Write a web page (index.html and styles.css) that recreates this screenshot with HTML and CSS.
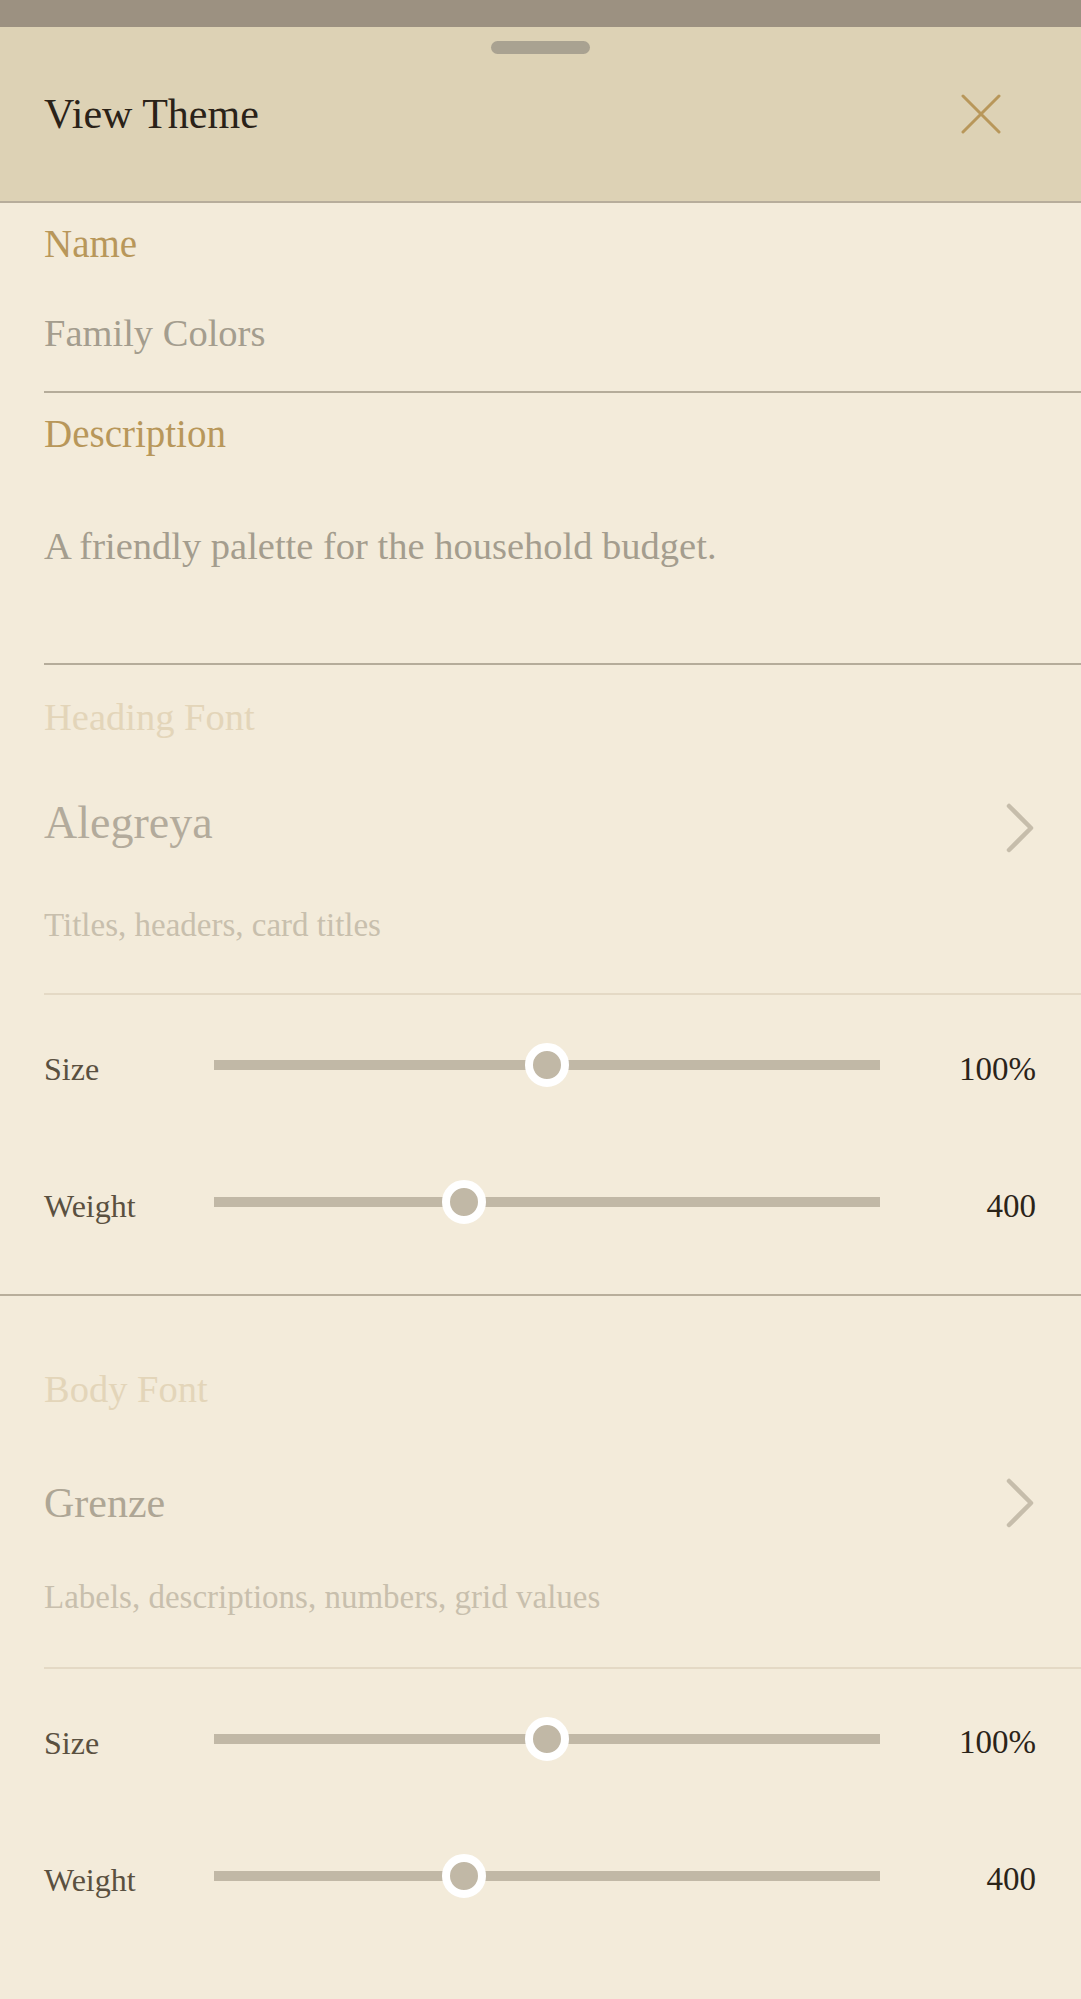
FILE: index.html
```html
<!DOCTYPE html>
<html lang="en">
<head>
<meta charset="utf-8">
<title>View Theme</title>
<link rel="stylesheet" href="styles.css">
</head>
<body>
<div class="statusbar"></div>
<div class="sheet">
  <header class="sheet-header">
    <div class="handle"></div>
    <div class="title-row">
      <h1 class="title">View Theme</h1>
      <button class="close" aria-label="Close">
        <svg width="40" height="40" viewBox="0 0 40 40"><path d="M2 2 L38 38 M38 2 L2 38" fill="none" stroke="#b8975a" stroke-width="3" stroke-linecap="round"/></svg>
      </button>
    </div>
  </header>

  <section class="fields">
    <div class="field field-name">
      <div class="field-label">Name</div>
      <div class="field-value">Family Colors</div>
    </div>
    <div class="field field-desc">
      <div class="field-label">Description</div>
      <div class="field-value">A friendly palette for the household budget.</div>
    </div>
  </section>

  <section class="font-section heading-section">
    <div class="font-picker">
      <div class="section-label">Heading Font</div>
      <div class="font-row">
        <span class="font-name alegreya">Alegreya</span>
        <svg class="chevron chevron-low" width="32" height="52" viewBox="0 0 32 52"><path d="M5 4 L27 26 L5 48" fill="none" stroke="#c6bdab" stroke-width="4.5" stroke-linecap="round" stroke-linejoin="round"/></svg>
      </div>
      <div class="font-hint">Titles, headers, card titles</div>
    </div>
    <div class="sliders">
      <div class="slider-row">
        <span class="slider-label">Size</span>
        <div class="slider"><div class="track"></div><div class="thumb" style="left:50%"></div></div>
        <span class="slider-value">100%</span>
      </div>
      <div class="slider-row">
        <span class="slider-label">Weight</span>
        <div class="slider"><div class="track"></div><div class="thumb" style="left:37.5%"></div></div>
        <span class="slider-value">400</span>
      </div>
    </div>
  </section>

  <section class="font-section body-section">
    <div class="font-picker">
      <div class="section-label">Body Font</div>
      <div class="font-row">
        <span class="font-name grenze">Grenze</span>
        <svg class="chevron" width="32" height="52" viewBox="0 0 32 52"><path d="M5 4 L27 26 L5 48" fill="none" stroke="#c6bdab" stroke-width="4.5" stroke-linecap="round" stroke-linejoin="round"/></svg>
      </div>
      <div class="font-hint">Labels, descriptions, numbers, grid values</div>
    </div>
    <div class="sliders">
      <div class="slider-row">
        <span class="slider-label">Size</span>
        <div class="slider"><div class="track"></div><div class="thumb" style="left:50%"></div></div>
        <span class="slider-value">100%</span>
      </div>
      <div class="slider-row">
        <span class="slider-label">Weight</span>
        <div class="slider"><div class="track"></div><div class="thumb" style="left:37.5%"></div></div>
        <span class="slider-value">400</span>
      </div>
    </div>
  </section>
</div>
</body>
</html>
```

FILE: styles.css
```css
html, body {
  margin: 0;
  padding: 0;
  background: #f3ebda;
}

body {
  font-family: "Liberation Serif", "Times New Roman", serif;
  color: #2a2218;
}

.statusbar {
  height: 27px;
  background: #9c9181;
}

.sheet {
  background: #f3ebda;
}

.sheet-header {
  background: #ddd2b5;
  padding: 14px 0 27px;
  border-bottom: 2px solid #b7ad9b;
}

.handle {
  width: 99px;
  height: 13px;
  border-radius: 7px;
  background: #a9a291;
  margin: 0 auto;
}

.title-row {
  height: 120px;
  display: flex;
  align-items: center;
  justify-content: space-between;
  padding-left: 44px;
  padding-right: 80px;
}

.title {
  margin: 0;
  font-size: 42px;
  font-weight: 400;
  line-height: 48px;
  color: #2a2218;
}

.close {
  border: 0;
  background: none;
  padding: 0;
  width: 40px;
  height: 40px;
  display: block;
}

.close svg {
  display: block;
}

/* text fields */
.fields {
  margin-left: 44px;
}

.field {
  padding-top: 18px;
  border-bottom: 2px solid #b5ac9a;
}

.field-label {
  font-size: 39px;
  line-height: 46px;
  color: #b8975a;
}

.field-value {
  font-size: 38.5px;
  line-height: 46px;
  color: #a49d8e;
}

.field-name .field-value {
  margin-top: 43px;
}

.field-name {
  padding-bottom: 35px;
}

.field-desc .field-value {
  margin-top: 66px;
}

.field-desc {
  padding-bottom: 94px;
}

/* font sections */
.font-section {
  border-bottom: 2px solid #b8ae9b;
}

.heading-section {
  padding-top: 29px;
  padding-bottom: 67px;
}

.body-section {
  padding-top: 70px;
  border-bottom: 0;
}

.font-picker {
  margin-left: 44px;
  border-bottom: 2px solid #e4d9c5;
}

.heading-section .font-picker {
  padding-bottom: 48px;
}

.body-section .font-picker {
  padding-bottom: 50px;
}

.section-label {
  font-size: 38.5px;
  line-height: 46px;
  color: #e3d5b9;
}

.font-row {
  height: 54px;
  display: flex;
  align-items: center;
  justify-content: space-between;
  padding-right: 45px;
}

.heading-section .font-row {
  margin-top: 56px;
}

.body-section .font-row {
  margin-top: 64px;
}

.font-name {
  line-height: 54px;
}

.font-name.alegreya {
  font-size: 46px;
  color: #b3ab9c;
}

.font-name.grenze {
  font-size: 42px;
  color: #aea695;
}

.chevron {
  display: block;
}

.chevron-low {
  margin-top: 10px;
}

.font-hint {
  font-size: 33px;
  line-height: 40px;
  color: #c8bfad;
}

.heading-section .font-hint {
  margin-top: 55px;
}

.body-section .font-hint {
  margin-top: 47px;
}

/* sliders */
.sliders {
  display: flex;
  flex-direction: column;
  gap: 87px;
}

.heading-section .sliders {
  margin-top: 45px;
}

.body-section .sliders {
  margin-top: 44.5px;
}

.slider-row {
  height: 50px;
  display: flex;
  align-items: center;
  padding-left: 44px;
  padding-right: 45px;
}

.slider-label {
  width: 170px;
  flex: none;
  font-size: 32px;
  line-height: 40px;
  margin-top: 8px;
  color: #5a5040;
}

.slider {
  position: relative;
  width: 666px;
  flex: none;
  height: 44px;
  display: flex;
  align-items: center;
}

.track {
  width: 100%;
  height: 10px;
  background: #c1b8a6;
}

.thumb {
  position: absolute;
  top: 50%;
  width: 28px;
  height: 28px;
  border: 8px solid #ffffff;
  border-radius: 50%;
  background: #c1b8a6;
  transform: translate(-50%, -50%);
}

.slider-value {
  flex: 1;
  text-align: right;
  font-size: 33px;
  line-height: 40px;
  margin-top: 7px;
  color: #2b2419;
}
```
